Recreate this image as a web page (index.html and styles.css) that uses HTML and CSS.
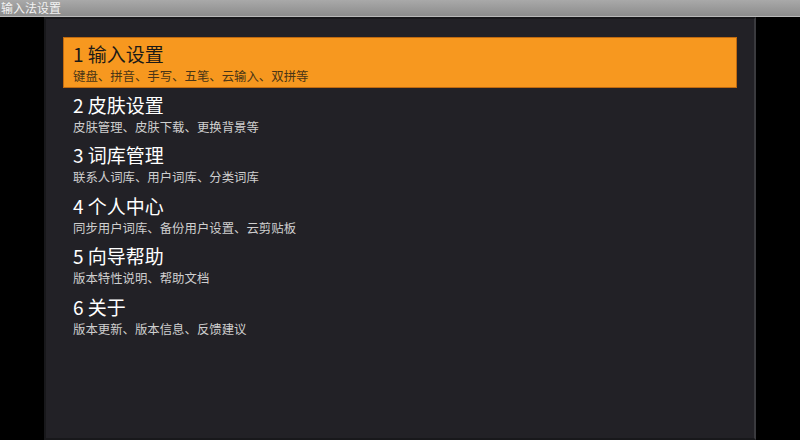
FILE: index.html
```html
<!DOCTYPE html>
<html lang="zh">
<head>
<meta charset="utf-8">
<link rel="stylesheet" href="styles.css">
</head>
<body>
<div class="titlebar">输入法设置</div>
<div class="stage">
  <div class="panel">
    <ul class="menu">
      <li class="item active"><div class="t">1 输入设置</div><div class="s">键盘、拼音、手写、五笔、云输入、双拼等</div></li>
      <li class="item"><div class="t">2 皮肤设置</div><div class="s">皮肤管理、皮肤下载、更换背景等</div></li>
      <li class="item"><div class="t">3 词库管理</div><div class="s">联系人词库、用户词库、分类词库</div></li>
      <li class="item"><div class="t">4 个人中心</div><div class="s">同步用户词库、备份用户设置、云剪贴板</div></li>
      <li class="item"><div class="t">5 向导帮助</div><div class="s">版本特性说明、帮助文档</div></li>
      <li class="item"><div class="t">6 关于</div><div class="s">版本更新、版本信息、反馈建议</div></li>
    </ul>
  </div>
</div>
</body>
</html>
```
FILE: styles.css
```css
* { box-sizing: border-box; }
html, body { margin: 0; padding: 0; }
body {
  width: 800px; height: 440px; overflow: hidden;
  background: #000;
  font-family: "Noto Sans CJK SC", "Noto Sans", sans-serif;
  display: flex; flex-direction: column;
}
.titlebar {
  height: 17px;
  background: linear-gradient(#a9a9a9, #8c8c8c);
  border-bottom: 1px solid #b8b8b8;
  color: #f2f2f2;
  font-size: 12px;
  line-height: 16px;
  padding-left: 1px;
}
.stage { flex: 1; display: flex; padding-left: 44px; }
.panel {
  width: 712px;
  height: 423px;
  background: #222126;
  border: 2px solid #18181b;
  border-right-color: #3a3a3e;
  padding: 18px 17px 0 17px;
}
.menu { list-style: none; margin: 0; padding: 0; }
.item {
  height: 50.5px;
  padding: 4px 0 0 10px;
  color: #fff;
}
.item.active {
  background: #f7981f;
  border: 1px solid #c06a10;
  padding: 3px 0 0 9px;
  color: #1c1a17;
}
.t { font-size: 19px; line-height: 26px; }
.s { font-size: 12.4px; line-height: 18px; color: #cfcfcf; }
.active .s { color: #4a3516; }
```
